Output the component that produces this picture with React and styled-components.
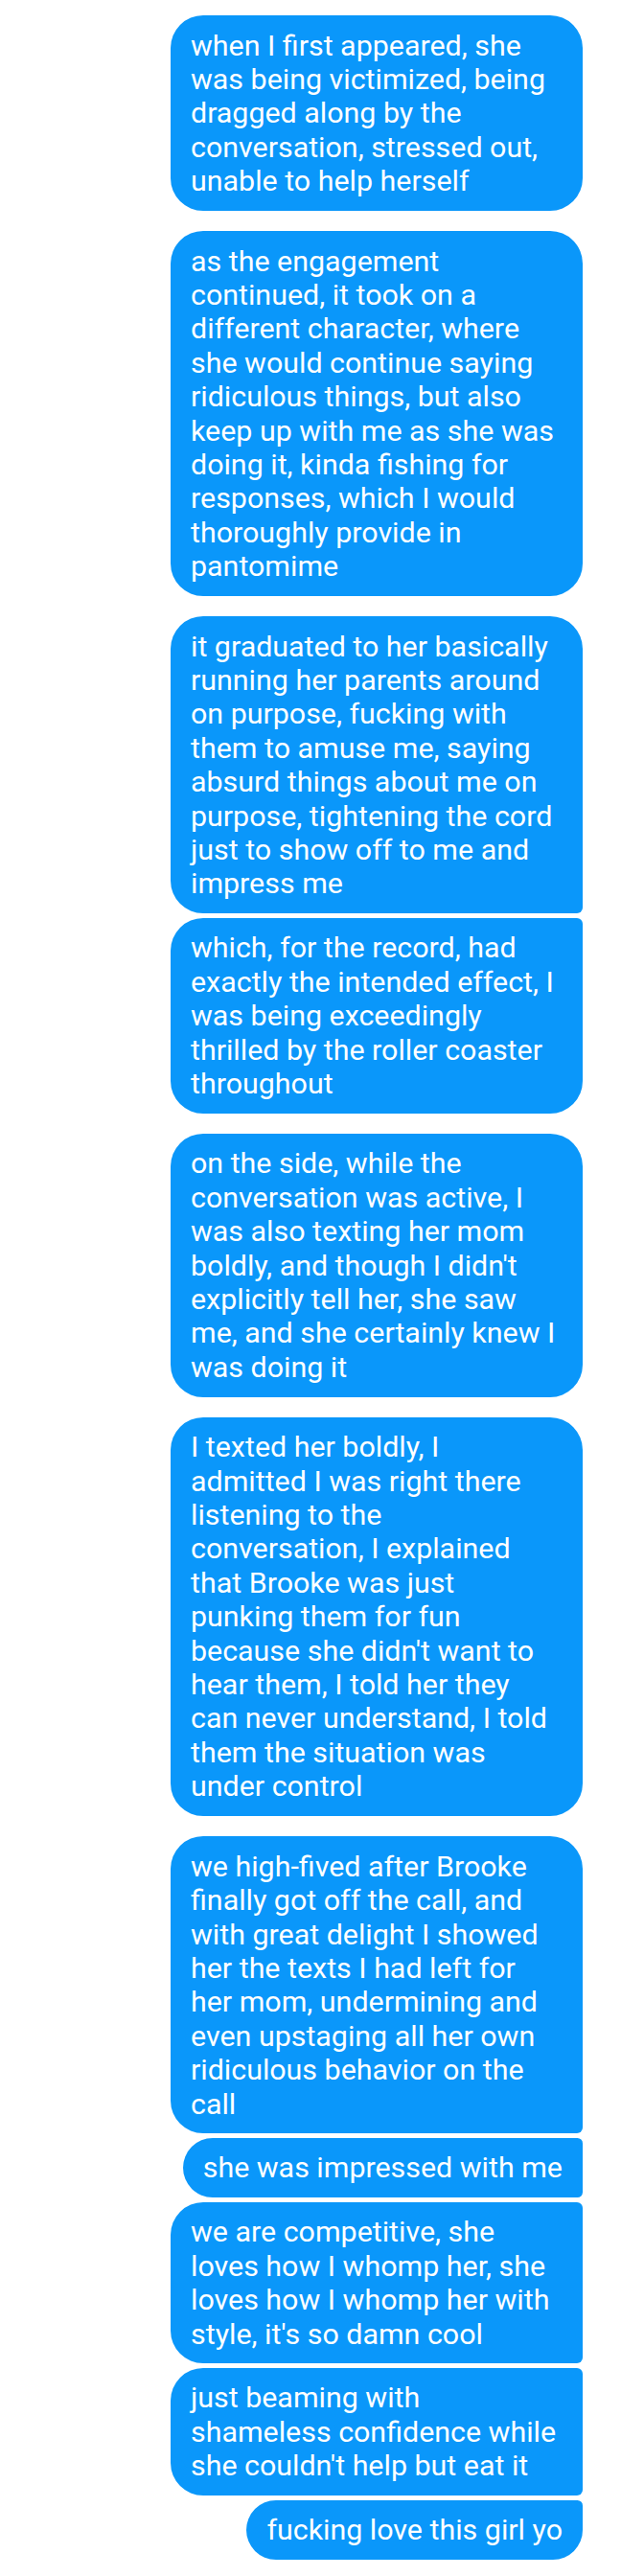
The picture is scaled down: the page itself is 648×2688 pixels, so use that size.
import React from "react";
import styled, { createGlobalStyle } from "styled-components";

// each message keeps the line breaks seen in the screenshot
const groups = [
  [
    [
      "when I first appeared, she",
      "was being victimized, being",
      "dragged along by the",
      "conversation, stressed out,",
      "unable to help herself",
    ],
  ],
  [
    [
      "as the engagement",
      "continued, it took on a",
      "different character, where",
      "she would continue saying",
      "ridiculous things, but also",
      "keep up with me as she was",
      "doing it, kinda fishing for",
      "responses, which I would",
      "thoroughly provide in",
      "pantomime",
    ],
  ],
  [
    [
      "it graduated to her basically",
      "running her parents around",
      "on purpose, fucking with",
      "them to amuse me, saying",
      "absurd things about me on",
      "purpose, tightening the cord",
      "just to show off to me and",
      "impress me",
    ],
    [
      "which, for the record, had",
      "exactly the intended effect, I",
      "was being exceedingly",
      "thrilled by the roller coaster",
      "throughout",
    ],
  ],
  [
    [
      "on the side, while the",
      "conversation was active, I",
      "was also texting her mom",
      "boldly, and though I didn't",
      "explicitly tell her, she saw",
      "me, and she certainly knew I",
      "was doing it",
    ],
  ],
  [
    [
      "I texted her boldly, I",
      "admitted I was right there",
      "listening to the",
      "conversation, I explained",
      "that Brooke was just",
      "punking them for fun",
      "because she didn't want to",
      "hear them, I told her they",
      "can never understand, I told",
      "them the situation was",
      "under control",
    ],
  ],
  [
    [
      "we high-fived after Brooke",
      "finally got off the call, and",
      "with great delight I showed",
      "her the texts I had left for",
      "her mom, undermining and",
      "even upstaging all her own",
      "ridiculous behavior on the",
      "call",
    ],
    ["she was impressed with me"],
    [
      "we are competitive, she",
      "loves how I whomp her, she",
      "loves how I whomp her with",
      "style, it's so damn cool",
    ],
    [
      "just beaming with",
      "shameless confidence while",
      "she couldn't help but eat it",
    ],
    ["fucking love this girl yo"],
  ],
];

function App() {
  return (
    <>
      <GlobalStyle />
      <Thread>
        {groups.map((group, gi) => (
          <Group key={gi}>
            {group.map((lines, i) => (
              <Bubble
                key={i}
                $wide={lines.length > 1}
                $joinTop={i > 0}
                $joinBottom={i < group.length - 1}
              >
                {lines.join("\n")}
              </Bubble>
            ))}
          </Group>
        ))}
      </Thread>
    </>
  );
}

export default App;

const GlobalStyle = createGlobalStyle`
  body {
    margin: 0;
    background: #fff;
  }
`;

const Thread = styled.div`
  display: flex;
  flex-direction: column;
  align-items: flex-end;
  gap: 21px;
  padding: 16px 40px 16px 0;
`;

const Group = styled.div`
  display: flex;
  flex-direction: column;
  align-items: flex-end;
  gap: 4.5px;
`;

const Bubble = styled.div`
  width: ${(p) => (p.$wide ? "430px" : "auto")};
  max-width: 430px;
  box-sizing: border-box;
  padding: 13.5px 21px;
  background: #0a97fa;
  color: #fff;
  font-family: Roboto, "Liberation Sans", sans-serif;
  font-size: 30.4px;
  line-height: 35.4px;
  white-space: pre-line;
  border-radius: 34px;
  border-top-right-radius: ${(p) => (p.$joinTop ? "6px" : "34px")};
  border-bottom-right-radius: ${(p) => (p.$joinBottom ? "6px" : "34px")};
`;
